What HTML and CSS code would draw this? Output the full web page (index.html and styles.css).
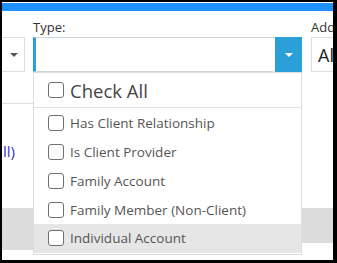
FILE: index.html
```html
<!DOCTYPE html>
<html lang="en">
<head>
    <meta charset="UTF-8">
    <title>Type filter</title>
    <link rel="stylesheet" href="styles.css">
</head>
<body>

<div class="screen">
    <div class="topbar"></div>

    <div class="filters">
        <div class="field field-prev">
            <label class="field-label">&nbsp;</label>
            <div class="select-box"><span class="caret"></span></div>
        </div>
        <div class="field field-type">
            <label class="field-label">Type:</label>
            <div class="combo">
                <div class="combo-input"></div>
                <div class="combo-button"><span class="caret caret-light"></span></div>
            </div>
        </div>
        <div class="field field-add">
            <label class="field-label">Address</label>
            <div class="select-box select-text">All</div>
        </div>
    </div>

    <div class="grid">
        <div class="grid-head"></div>
        <div class="grid-body">
            <a class="grid-link">ll)</a>
        </div>
        <div class="grid-footer"></div>
        <div class="grid-footer-edge"></div>
    </div>

    <div class="dropdown">
        <label class="check-row check-all">
            <span class="box"></span>Check All
        </label>
        <div class="options">
            <label class="check-row"><span class="box"></span>Has Client Relationship</label>
            <label class="check-row"><span class="box"></span>Is Client Provider</label>
            <label class="check-row"><span class="box"></span>Family Account</label>
            <label class="check-row"><span class="box"></span>Family Member (Non-Client)</label>
            <label class="check-row hover"><span class="box"></span>Individual Account</label>
        </div>
    </div>
</div>

</body>
</html>
```

FILE: styles.css
```css
body {
    margin: 0;
    background: #000;
    font-family: "Open Sans", "Noto Sans", sans-serif;
    color: #444;
}
.screen {
    position: relative;
    margin: 2px 4px 0 2px;
    height: 258px;
    background: #fff;
    overflow: hidden;
}
.topbar {
    margin-top: 1px;
    height: 8px;
    background: #1e90ff;
}
.filters {
    display: flex;
    padding-top: 8px;
}
.field-label {
    display: block;
    height: 16px;
    margin-bottom: 2px;
    font-size: 13px;
    line-height: 16px;
    color: #333;
    white-space: nowrap;
}
.field-prev {
    width: 23px;
    flex: none;
}
.field-type {
    width: 269px;
    flex: none;
    margin-left: 8px;
}
.field-add {
    flex: none;
    width: 40px;
    margin-left: 9px;
}
.select-box {
    box-sizing: border-box;
    height: 35px;
    border: 1px solid #ddd;
    display: flex;
    align-items: center;
}
.field-prev .select-box {
    border-left: none;
    padding-left: 8px;
}
.select-text {
    padding-left: 6px;
    font-size: 18px;
    color: #222;
}
.caret {
    width: 0;
    height: 0;
    border-left: 4px solid transparent;
    border-right: 4px solid transparent;
    border-top: 4px solid #555;
}
.caret-light {
    border-top-color: #fff;
}
.combo {
    display: flex;
    height: 35px;
}
.combo-input {
    flex: 1;
    box-sizing: border-box;
    border: 1px solid #cfd6da;
    border-left: 3px solid #2b9fd8;
    border-right: none;
    border-radius: 0 0 3px 0;
}
.combo-button {
    width: 27px;
    background: #2b9fd8;
    display: flex;
    align-items: center;
    justify-content: center;
}
.grid {
    display: flex;
    flex-direction: column;
}
.grid-head {
    width: 31px;
    height: 31px;
    border-bottom: 1px solid #ddd;
}
.grid-body {
    height: 104px;
    padding-left: 1px;
    padding-top: 36px;
    box-sizing: border-box;
}
.grid-link {
    font-size: 15px;
    color: #3333cc;
}
.grid-footer {
    height: 35px;
    background: #dcdcdc;
}
.grid-footer-edge {
    width: 31px;
    height: 7px;
    background: #dcdcdc;
}
.dropdown {
    position: absolute;
    left: 31px;
    top: 70px;
    box-sizing: border-box;
    width: 269px;
    height: 183px;
    background: #fff;
    border: 1px solid #ddd;
}
.check-row {
    display: flex;
    align-items: center;
    height: 28.75px;
    padding-left: 14px;
    font-size: 13.5px;
    color: #555;
    white-space: nowrap;
}
.check-row .box {
    box-sizing: border-box;
    width: 16px;
    height: 16px;
    margin-right: 6px;
    border: 1.5px solid #707070;
    border-radius: 3px;
    background: #fff;
}
.check-all {
    height: 34px;
    border-bottom: 1px solid #e2e2e2;
    font-size: 18.5px;
    color: #444;
}
.options {
    padding-top: 1px;
}
.hover {
    background: #e6e6e6;
}
```
